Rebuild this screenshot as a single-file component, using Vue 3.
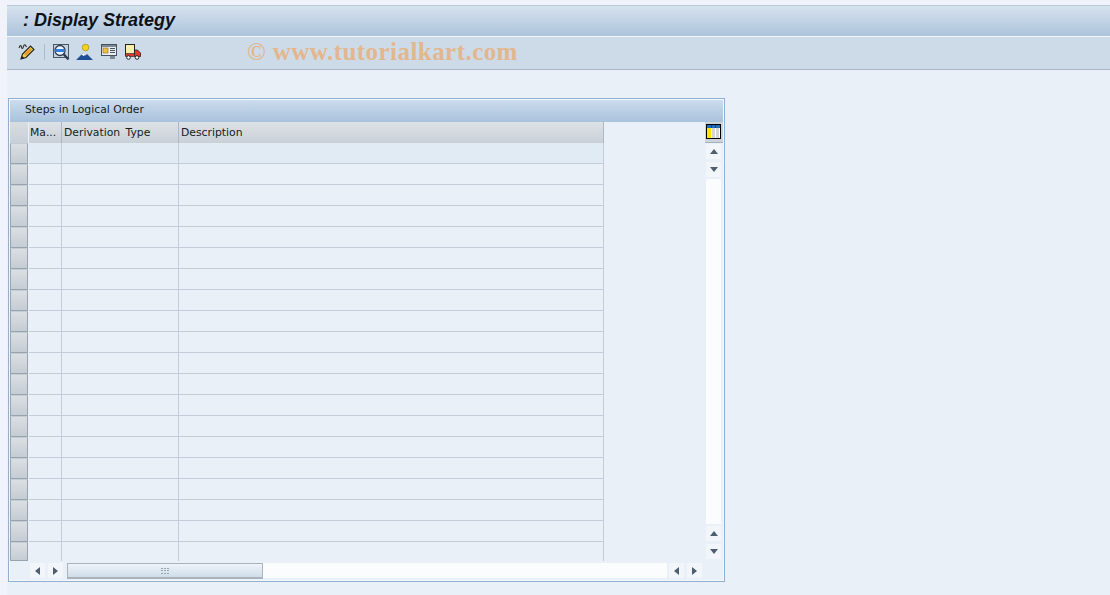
<script setup>
const rows = Array.from({ length: 20 }, (_, i) => i)
</script>

<template>
  <div class="page">
    <header class="title-bar"><h1>: Display Strategy</h1></header>
    <div class="toolbar">
      <svg class="icon" viewBox="0 0 18 18" width="18" height="18">
        <path d="M1 5c1-3 2-3 2.500-1s1.500 2 2-.5 2-2 3 .5" fill="none" stroke="#333" stroke-width="1.100"/>
        <path d="M3 16l1.500-5 8-8 3.500 3.500-8 8z" fill="#f5d34c" stroke="#222" stroke-width="1.100"/>
        <path d="M6 11l6-6 2 2-6 6z" fill="#e89a2c"/>
        <path d="M3 16l1-3 2.500 2z" fill="#222"/>
      </svg>
      <span class="sep"></span>
      <svg class="icon" viewBox="0 0 18 18" width="18" height="18">
        <rect x="1.500" y="1.500" width="15" height="13" fill="#c9d3dd" stroke="#46576a"/>
        <circle cx="8" cy="7.500" r="5" fill="#eef5fc" stroke="#2f3e4e" stroke-width="1.300"/>
        <path d="M3.500 6h9v3h-9z" fill="#2f7fe0"/>
        <path d="M11.500 11l5 5.500" stroke="#2f3e4e" stroke-width="2.400"/>
      </svg>
      <svg class="icon" viewBox="0 0 18 18" width="18" height="18">
        <circle cx="9.500" cy="4.500" r="3.300" fill="#f5d21f" stroke="#a98a10" stroke-width=".7"/>
        <path d="M0 17l7-7 2.500 2.500 1.500-1.500 6 6z" fill="#1f4f96"/>
        <path d="M5.500 11.500l1.800-1.500 2 2-2 1-1-1z" fill="#fff"/>
      </svg>
      <svg class="icon" viewBox="0 0 18 18" width="18" height="18">
        <rect x="1.500" y="1.500" width="15" height="11" fill="#e8eef4" stroke="#46525e"/>
        <path d="M2 2h14v2H2z" fill="#7c8a98"/>
        <rect x="3" y="5" width="5" height="5" fill="#f0c040" stroke="#8a6a20" stroke-width=".6"/>
        <path d="M10 5.500h5M10 7.500h5M10 9.500h5" stroke="#46525e"/>
        <rect x="10" y="13" width="5" height="3" fill="#7c8a98"/>
      </svg>
      <svg class="icon" viewBox="0 0 18 18" width="18" height="18">
        <rect x="1.500" y="1.500" width="9" height="11" fill="#fbeea8" stroke="#222"/>
        <path d="M10.500 7h3l3 3v3.500h-6z" fill="#e03a2c" stroke="#222" stroke-width=".8"/>
        <path d="M1.500 10.500h9v3h-9z" fill="#e03a2c" stroke="#222" stroke-width=".6"/>
        <circle cx="4.500" cy="14.500" r="1.800" fill="#fff" stroke="#222"/>
        <circle cx="13" cy="14.500" r="1.800" fill="#fff" stroke="#222"/>
      </svg>
      <span class="watermark">© www.tutorialkart.com</span>
    </div>

    <section class="panel">
      <h2 class="panel-title">Steps in Logical Order</h2>
      <div class="panel-body">
        <div class="table-area">
          <div class="grid">
            <div class="head-row">
              <div class="corner"></div>
              <div class="hcell c1">Ma...</div>
              <div class="hcell c2">Derivation Type</div>
              <div class="hcell c3">Description</div>
            </div>
            <div v-for="r in rows" :key="r" class="row" :class="{ first: r === 0, last: r === 19 }">
              <div class="selector"></div>
              <div class="cell c1"></div>
              <div class="cell c2"></div>
              <div class="cell c3"></div>
            </div>
          </div>
          <div class="vscroll">
            <button class="config" aria-label="Table settings">
              <svg viewBox="0 0 15 15" width="15" height="15">
                <rect x=".5" y=".5" width="14" height="14" fill="#fff" stroke="#000"/>
                <rect x="1" y="1" width="13" height="3" fill="#1f6fc0"/>
                <rect x="1" y="4" width="4" height="10" fill="#ffe500"/>
                <rect x="6" y="4" width="3" height="10" fill="#d5d5d5"/>
                <rect x="10" y="4" width="3" height="10" fill="#d5d5d5"/>
                <path d="M5.500 1v3M9.500 1v3" stroke="#1c3f66"/>
              </svg>
            </button>
            <span class="sbtn"><i class="arr up"></i></span>
            <span class="sbtn"><i class="arr down"></i></span>
            <span class="vtrack"></span>
            <span class="sbtn"><i class="arr up"></i></span>
            <span class="sbtn"><i class="arr down"></i></span>
          </div>
        </div>
        <div class="hscroll">
          <span class="sbtn"><i class="arr left"></i></span>
          <span class="sbtn"><i class="arr right"></i></span>
          <div class="htrack">
            <div class="thumb">
              <svg width="8" height="6" viewBox="0 0 8 6" fill="#9aa6b2">
                <rect x="0" y="0" width="2" height="1"/><rect x="3" y="0" width="2" height="1"/><rect x="6" y="0" width="2" height="1"/>
                <rect x="0" y="2" width="2" height="1"/><rect x="3" y="2" width="2" height="1"/><rect x="6" y="2" width="2" height="1"/>
                <rect x="0" y="5" width="2" height="1"/><rect x="3" y="5" width="2" height="1"/><rect x="6" y="5" width="2" height="1"/>
              </svg>
            </div>
          </div>
          <span class="sbtn"><i class="arr left"></i></span>
          <span class="sbtn"><i class="arr right"></i></span>
        </div>
      </div>
    </section>
  </div>
</template>

<style>
html, body { margin: 0; background: #f0f4fa; }
</style>

<style scoped>
.page {
  box-sizing: border-box;
  width: 1110px;
  height: 595px;
  padding: 5px 0 0 7px;
  overflow: hidden;
  font-family: "DejaVu Sans", sans-serif;
  color: #141c24;
  background: linear-gradient(#e9f0f8, #e9f0f8) 7px 5px no-repeat;
}
.title-bar {
  height: 32px;
  box-sizing: border-box;
  padding-left: 16px;
  display: flex;
  align-items: center;
  background: linear-gradient(#d6e2ee, #adc4dc);
  border-top: 1px solid #b9c9da;
  border-bottom: 1px solid #f2f6fa;
}
h1 {
  margin: 0 0 1px;
  font: italic bold 18px "Liberation Sans", sans-serif;
  color: #0d1218;
}
.toolbar {
  position: relative;
  height: 33px;
  box-sizing: border-box;
  padding: 0 0 2px 11px;
  display: flex;
  align-items: center;
  gap: 6px;
  background: #cddbe8;
  border-bottom: 1px solid #aab6c8;
}
.icon { flex: none; }
.sep { width: 1px; height: 16px; background: #a9bccf; margin: 0 1px 0 2px; }
.watermark {
  position: absolute;
  left: 240px;
  top: 1px;
  font: bold 25px "Liberation Serif", serif;
  letter-spacing: .45px;
  color: #e3b78e;
  white-space: nowrap;
}
.panel {
  box-sizing: border-box;
  width: 717px;
  height: 484px;
  margin: 28px 0 0 1px;
  background: #e9f0f8;
  border: 1px solid #8fb0d0;
  padding: 1px;
  box-shadow: inset 0 0 0 1px #f4f7fb;
}
.panel-title {
  margin: 0;
  height: 22px;
  box-sizing: border-box;
  padding: 2px 0 0 15px;
  font-size: 10.800px;
  font-weight: 400;
  line-height: 15px;
  background: linear-gradient(#cbdcec, #a9c2dc);
}
.panel-body { display: flex; flex-direction: column; }
.table-area { display: flex; height: 439px; }
.grid { width: 594px; }
.head-row { display: flex; height: 21px; }
.row { display: flex; height: 21px; }
.row.last { height: 19px; }
.corner { width: 18px; background: linear-gradient(#d8dde2, #c8cfd6); margin-right: 1px; }
.hcell {
  box-sizing: border-box;
  padding: 3px 0 0 2px;
  font-size: 10.800px;
  word-spacing: 2px;
  line-height: 16px;
  white-space: nowrap;
  background: linear-gradient(#dde2e7, #c9d0d7);
  border-right: 1px solid #aeb8c3;
}
.hcell.c1 { padding-left: 1px; }
.c1 { width: 33px; }
.c2 { width: 117px; }
.c3 { width: 425px; }
.selector {
  box-sizing: border-box;
  width: 18px;
  margin-right: 1px;
  background: linear-gradient(#dadfe3, #c5ccd3);
  border: 1px solid #97a3af;
  border-top-color: #c3cbd3;
}
.cell {
  box-sizing: border-box;
  border-right: 1px solid #c3cdd9;
  border-bottom: 1px solid #c3cdd9;
}
.first .cell { background: #e0ebf4; }
.last .cell { border-bottom: 0; }
.vscroll {
  width: 18px;
  margin-left: 101px;
  padding-bottom: 2px;
  box-sizing: border-box;
  display: flex;
  flex-direction: column;
  align-items: flex-start;
  gap: 2px;
}
.config {
  width: 18px;
  height: 21px;
  padding: 2px 0 0 1px;
  margin-bottom: -1px;
  border: 0;
  border-bottom: 1px solid #a8b2bd;
  background: #ccd3da;
  display: flex;
  align-items: flex-start;
  justify-content: flex-start;
}
.vscroll .sbtn { margin-left: 1px; }
.vscroll .sbtn + .sbtn { margin-top: 1px; }
.sbtn {
  flex: none;
  width: 15px;
  height: 15px;
  background: #f2f6fa;
  display: flex;
  align-items: center;
  justify-content: center;
}
.vtrack { flex: 1; width: 15px; margin-left: 1px; background: #fbfcfd; }
.arr { display: block; width: 0; height: 0; border-style: solid; border-color: transparent; }
.up { border-width: 0 4.500px 5px; border-bottom-color: #4c5e70; }
.down { border-width: 5px 4.500px 0; border-top-color: #4c5e70; }
.left { border-width: 4.500px 5px 4.500px 0; border-right-color: #4c5e70; }
.right { border-width: 4.500px 0 4.500px 5px; border-left-color: #4c5e70; }
.hscroll {
  display: flex;
  align-items: flex-start;
  gap: 3px;
  height: 17px;
  margin-top: 2px;
  padding-left: 20px;
}
.htrack { width: 600px; height: 15px; background: #fbfcfd; margin: 0 -1px 0 1px; }
.thumb {
  box-sizing: border-box;
  width: 196px;
  height: 16px;
  background: linear-gradient(#eef4f9, #cfdde9);
  border: 1px solid #aab3bc;
  border-bottom-width: 2px;
  display: flex;
  align-items: center;
  justify-content: center;
}
</style>
